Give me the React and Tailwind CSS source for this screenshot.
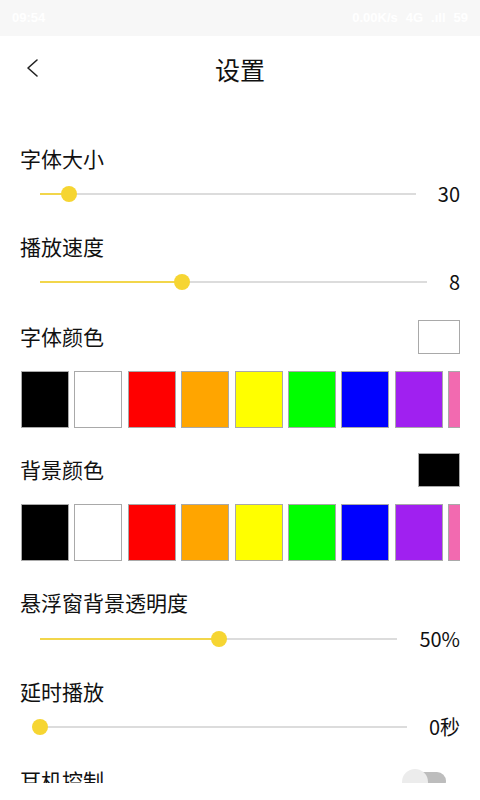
import React from "react";

const font = { fontFamily: '"Noto Sans CJK SC", "Noto Sans", sans-serif' };

function Slider({ pct, value }) {
  return (
    <div className="flex items-center h-6">
      <div className="flex-1 ml-5 mr-[22px] relative h-6">
        <div className="absolute left-0 right-0 top-[11px] h-[2px] bg-[#dcdcdc]" />
        <div className="absolute left-0 top-[11px] h-[2px] bg-[#f2d64b]" style={{ width: `${pct}%` }} />
        <div
          className="absolute top-[4px] w-4 h-4 -ml-2 rounded-full bg-[#f6d532]"
          style={{ left: `${pct}%` }}
        />
      </div>
      <span className="text-[20px] leading-6 text-[#111]" style={font}>{value}</span>
    </div>
  );
}

const colors = ["#000000", "#ffffff", "#ff0000", "#ffa500", "#ffff00", "#00ff00", "#0000ff", "#a020f0", "#f26ab0"];

function Swatches() {
  return (
    <div className="flex gap-[5.4px] pl-px overflow-hidden h-[57px]">
      {colors.map((c) => (
        <div key={c} className="w-[48px] h-[57px] shrink-0 border-[1.5px] border-[#a9a9a9]" style={{ background: c }} />
      ))}
    </div>
  );
}

function Label({ children }) {
  return <div className="text-[21px] leading-7 h-7 text-[#111]" style={font}>{children}</div>;
}

export default function App() {
  return (
    <div className="w-[480px] h-[800px] bg-white overflow-hidden flex flex-col" style={font}>
      <div className="h-9 bg-[#f7f7f7] flex items-center justify-between px-2 text-white text-[13px] shrink-0" style={{ fontFamily: '"Liberation Sans", sans-serif' }}>
        <span className="font-bold ml-1">09:54</span>
        <span className="font-bold flex items-center gap-2 mr-1">
          <span>0.00K/s</span>
          <span>4G</span>
          <span>.ıll</span>
          <span>59</span>
        </span>
      </div>
      <div className="h-[68px] shrink-0 relative flex items-center justify-center">
        <svg className="absolute left-[24px] top-[21px]" width="18" height="22" viewBox="0 0 18 22" fill="none">
          <path d="M13 3 L4 11 L13 19" stroke="#222" strokeWidth="1.6" strokeLinecap="round" strokeLinejoin="round" />
        </svg>
        <span className="text-[25px] text-[#111]">设置</span>
      </div>
      <div className="h-[679px] overflow-hidden px-5 pt-10 flex flex-col shrink-0">
        <Label>字体大小</Label>
        <div className="mt-[10px]"><Slider pct={7.7} value="30" /></div>
        <div className="mt-[26px]"><Label>播放速度</Label></div>
        <div className="mt-[10px]"><Slider pct={36.7} value="8" /></div>
        <div className="mt-[26px] h-[34px] flex items-center justify-between">
          <span className="text-[21px] text-[#111]">字体颜色</span>
          <div className="w-[42px] h-[34px] border border-[#a9a9a9] bg-white" />
        </div>
        <div className="mt-[17px]"><Swatches /></div>
        <div className="mt-[25px] h-[34px] flex items-center justify-between">
          <span className="text-[21px] text-[#111]">背景颜色</span>
          <div className="w-[42px] h-[34px] border border-[#a9a9a9] bg-black" />
        </div>
        <div className="mt-[17px]"><Swatches /></div>
        <div className="mt-[27px]"><Label>悬浮窗背景透明度</Label></div>
        <div className="mt-[11px]"><Slider pct={50} value="50%" /></div>
        <div className="mt-[26px]"><Label>延时播放</Label></div>
        <div className="mt-[10px]"><Slider pct={0} value="0秒" /></div>
        <div className="mt-[28px] h-7 flex items-center justify-between shrink-0">
          <span className="text-[21px] text-[#111]">耳机控制</span>
          <div className="relative w-[44px] h-[22px] mr-[14px] mt-[-2px]">
            <div className="absolute left-[10px] right-0 top-[3px] h-[18px] rounded-full bg-[#bdbdbd]" />
            <div className="absolute left-0 top-0 w-[26px] h-[26px] rounded-full bg-[#ececec]" />
          </div>
        </div>
      </div>
      <div className="flex-1 bg-white" />
    </div>
  );
}
